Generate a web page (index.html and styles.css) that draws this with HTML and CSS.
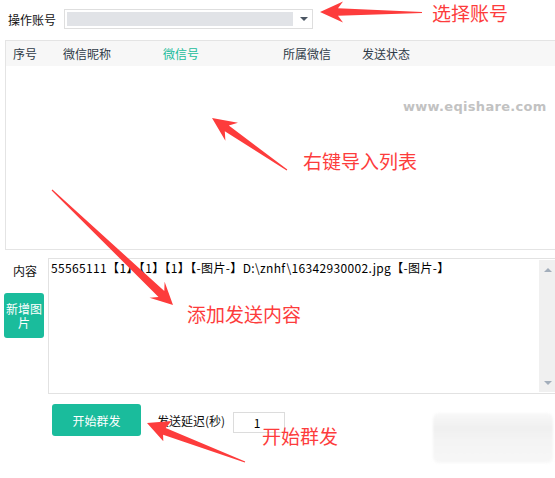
FILE: index.html
```html
<!DOCTYPE html>
<html lang="zh-CN">
<head>
<meta charset="utf-8">
<title>群发</title>
<link rel="stylesheet" href="styles.css">
</head>
<body>
<div class="page">
  <div class="toprow">
    <span class="label">操作账号</span>
    <div class="combo">
      <div class="combo-field"></div>
      <div class="combo-btn"><span class="tri-down"></span></div>
    </div>
  </div>

  <div class="table">
    <div class="thead">
      <span class="c1">序号</span>
      <span class="c2">微信昵称</span>
      <span class="c3 active">微信号</span>
      <span class="c4">所属微信</span>
      <span class="c5">发送状态</span>
    </div>
    <div class="tbody">
      <span class="watermark">www.eqishare.com</span>
    </div>
  </div>

  <div class="content-row">
    <div class="side">
      <span class="label side-label">内容</span>
      <button class="btn btn-img"><span class="bl">新增图</span><span class="bl">片</span></button>
    </div>
    <div class="textarea">
      <div class="ta-text">55565111【1】【1】【1】【-图片-】D:\znhf\16342930002.jpg【-图片-】</div>
      <div class="scrollbar">
        <span class="tri-up sb"></span>
        <span class="tri-down sb"></span>
      </div>
    </div>
  </div>

  <div class="bottom-row">
    <button class="btn btn-start">开始群发</button>
    <span class="label delay-label">发送延迟(秒)</span>
    <div class="num-input">1</div>
  </div>

  <div class="blur"></div>

  <svg class="arrows" width="555" height="478" viewBox="0 0 555 478">
    <polygon points="320,12 343,22.5 338,15.8 422,13 422,12 338,8.2 343,1.5"/>
    <polygon points="212,118 225.4,140.7 224.8,131.2 286.7,170.4 287.3,169.6 228.8,125.4 238,122.7"/>
    <polygon points="173,305 149.5,297.8 158.5,297 51.6,190.4 52.4,189.6 164.3,291 164.6,281.8"/>
    <polygon points="147,423 163.3,441.3 163.1,434.7 244.8,462.5 245.2,461.5 165.7,428.1 171.5,420.9"/>
  </svg>
  <span class="note n1">选择账号</span>
  <span class="note n2">右键导入列表</span>
  <span class="note n3">添加发送内容</span>
  <span class="note n4">开始群发</span>
</div>
</body>
</html>
```

FILE: styles.css
```css
html, body {
  margin: 0;
  padding: 0;
  background: #ffffff;
  overflow: hidden;
}
.page {
  position: relative;
  width: 570px;
  height: 478px;
  font-family: "Noto Sans CJK SC", "Microsoft YaHei", sans-serif;
  font-size: 12px;
  color: #000;
}
.label {
  font-size: 12px;
  line-height: 16px;
  color: #111;
}
.toprow {
  display: flex;
  align-items: center;
  padding-top: 9px;
  padding-left: 8px;
  height: 20px;
}
.toprow .label {
  width: 56px;
  margin-top: 1px;
}
.combo {
  display: flex;
  width: 247px;
  height: 18px;
  border: 1px solid #dedede;
  background: #fff;
  padding: 0;
}
.combo-field {
  margin: 2px 0 2px 2px;
  width: 226px;
  height: 14px;
  background: #e1e3e7;
}
.combo-btn {
  flex: 1;
  display: flex;
  align-items: center;
  justify-content: center;
  padding-left: 2px;
}
.tri-down {
  display: block;
  width: 0;
  height: 0;
  border-left: 4px solid transparent;
  border-right: 4px solid transparent;
  border-top: 4px solid #4b5663;
}
.tri-up {
  display: block;
  width: 0;
  height: 0;
  border-left: 4px solid transparent;
  border-right: 4px solid transparent;
  border-bottom: 4px solid #a3aebb;
}
.table {
  margin: 11px 0 0 5px;
  width: 560px;
  height: 208px;
  border: 1px solid #e4e4e4;
}
.thead {
  display: grid;
  grid-template-columns: 50px 100px 120px 79px 1fr;
  align-items: center;
  height: 25px;
  padding-left: 7px;
  background: #f7f7f7;
  color: #2f3b48;
  font-size: 12px;
}
.thead .active {
  color: #1abc9c;
}
.tbody {
  position: relative;
  height: 183px;
}
.watermark {
  position: absolute;
  left: 397px;
  top: 33px;
  font-family: "DejaVu Sans", sans-serif;
  font-weight: bold;
  font-size: 13px;
  letter-spacing: 0.3px;
  color: #c2c2c2;
}
.content-row {
  display: flex;
  margin-top: 8px;
}
.side {
  width: 48px;
  display: flex;
  flex-direction: column;
}
.side-label {
  margin: 5px 0 0 13px;
}
.btn {
  border: none;
  background: #1abc9c;
  color: #fff;
  font-family: "Noto Sans CJK SC", sans-serif;
  border-radius: 3px;
  padding: 0;
  cursor: pointer;
}
.btn-img {
  margin: 14px 0 0 4px;
  width: 40px;
  height: 45px;
  font-size: 12px;
  display: flex;
  flex-direction: column;
  align-items: center;
  justify-content: center;
}
.bl {
  display: block;
  line-height: 14px;
  height: 14px;
}
.textarea {
  position: relative;
  width: 508px;
  height: 134px;
  border: 1px solid #e2e2e2;
  display: flex;
}
.ta-text {
  flex: 1;
  padding: 2px 0 0 2px;
  font-family: "Noto Sans CJK SC", "DejaVu Sans Mono", monospace;
  font-size: 12px;
  line-height: 14px;
  letter-spacing: 0.35px;
  color: #000;
  white-space: nowrap;
}
.scrollbar {
  width: 17px;
  margin: 1px 1px 1px 0;
  background: #f0f0f0;
  display: flex;
  flex-direction: column;
  align-items: center;
  justify-content: space-between;
  padding: 8px 0 7px;
  box-sizing: border-box;
}
.tri-down.sb {
  border-top-color: #a3aebb;
}
.bottom-row {
  display: flex;
  align-items: center;
  margin: 10px 0 0 52px;
}
.btn-start {
  width: 89px;
  height: 32px;
  font-size: 12px;
}
.delay-label {
  margin-left: 16px;
  margin-top: 1px;
  width: 76px;
}
.num-input {
  margin-top: 5px;
  width: 46px;
  height: 19px;
  border: 1px solid #dcdcdc;
  text-align: center;
  font-family: "Noto Sans CJK SC", sans-serif;
  font-size: 12px;
  line-height: 19px;
  padding-right: 4px;
  box-sizing: content-box;
}
.blur {
  position: absolute;
  left: 433px;
  top: 413px;
  width: 120px;
  height: 50px;
  border-radius: 6px;
  background: linear-gradient(180deg, #f8f8f8 0%, #f0f0f0 30%, #f4f4f4 55%, #f7f7f7 100%);
  filter: blur(1px);
}
.arrows {
  position: absolute;
  left: 0;
  top: 0;
  pointer-events: none;
}
.arrows polygon {
  fill: #fd3c3c;
}
.note {
  position: absolute;
  font-family: "Noto Sans CJK SC", sans-serif;
  font-size: 19px;
  line-height: 21px;
  color: #fd3c3c;
  white-space: nowrap;
}
.n1 { left: 432px; top: 2px; }
.n2 { left: 303px; top: 150px; }
.n3 { left: 187px; top: 303px; }
.n4 { left: 262px; top: 425px; }
```
